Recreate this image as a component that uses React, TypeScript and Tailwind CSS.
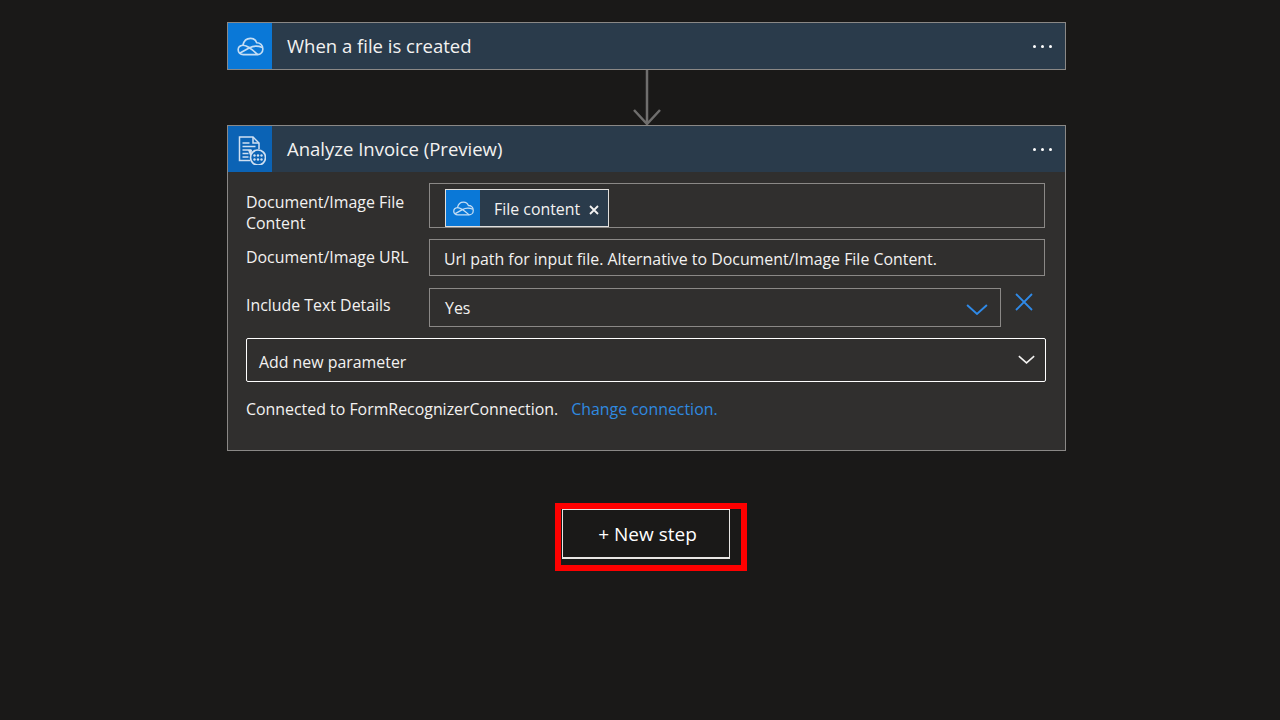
import React from 'react';

const CloudIcon = ({ className }: { className: string }) => (
  <svg className={className} viewBox="0 0 28 20" fill="none" stroke="currentColor" strokeWidth={1.700} strokeLinejoin="round">
    <path d="M6.500 18.500C3 18.500 1 16 1 13.500 1 11 3 9 6 8.700 7 4 10.500 1.500 14 1.500c3 0 5.500 1.500 6.500 4.500C24 6 27 8.500 27 12.500c0 3.500-2.500 6-5.500 6z" />
    <path d="M6 8.700c5.500.3 9.500 4.300 15.500 9.800M3 16.800l9.500-5.300c4-2.200 9-2.600 14-.5" />
  </svg>
);

const InvoiceIcon = () => (
  <svg className="w-[32px] h-[32px] text-[#cfe0f2]" viewBox="0 0 32 32" fill="none" stroke="currentColor" strokeWidth={1.500}>
    <path d="M16 27.500H5.500V4h13.500l6 6v6" />
    <path d="M19 4v6h6" />
    <path d="M8.500 10h7M8.500 13.500h13M8.500 17h9M8.500 20.500h6M8.500 24h6" />
    <path d="M14 17l4 0-1 8z" fill="currentColor" stroke="none" />
    <circle cx="24" cy="24.500" r="7.500" fill="#0b63b5" strokeWidth={1.700} />
    <g fill="currentColor" stroke="none">
      <circle cx="20.500" cy="22.500" r="1.200" />
      <circle cx="24" cy="22.500" r="1.200" />
      <circle cx="27.500" cy="22.500" r="1.200" />
      <circle cx="20.500" cy="26.500" r="1.200" />
      <circle cx="24" cy="26.500" r="1.200" />
      <circle cx="27.500" cy="26.500" r="1.200" />
    </g>
  </svg>
);

const Chevron = ({ className }: { className: string }) => (
  <svg className={className} viewBox="0 0 20 10" fill="none" stroke="currentColor" strokeWidth={1.800}>
    <path d="M1 1l9 8 9-8" />
  </svg>
);

const Dots = () => (
  <div className="flex items-center gap-[5px] mr-[13px]">
    <span className="w-[3px] h-[3px] rounded-full bg-white" />
    <span className="w-[3px] h-[3px] rounded-full bg-white" />
    <span className="w-[3px] h-[3px] rounded-full bg-white" />
  </div>
);

const CardHeader = ({ title, iconBg, icon }: { title: string; iconBg: string; icon: React.ReactNode }) => (
  <div className="flex items-center h-[46px] bg-[#2a3b4b]">
    <div className={`w-[44px] h-full flex items-center justify-center ${iconBg}`}>{icon}</div>
    <div className="flex-1 pl-[15px] text-[18.500px] text-[#f3f2f1]">{title}</div>
    <Dots />
  </div>
);

export default function App() {
  return (
    <div className="w-[1280px] h-[720px] bg-[#1a1918] overflow-hidden pt-[22px] pl-[227px] text-[15.900px] text-[#f3f2f1] font-['Open_Sans','Noto_Sans',sans-serif]">
      <div className="w-[839px]">
        <div className="border border-[#8a8886]">
          <CardHeader title="When a file is created" iconBg="bg-[#0a78d7]" icon={<CloudIcon className="w-[27px] h-[19px] text-[#c5def5]" />} />
        </div>

        <div className="flex justify-center h-[55px] text-[#6f6e6d]">
          <svg className="w-[30px] h-[55px]" viewBox="0 0 30 55" fill="none" stroke="currentColor" strokeWidth={2.500}>
            <path d="M15 0v54M2 40l13 14 13-14" />
          </svg>
        </div>

        <div className="border border-[#8a8886] bg-[#302f2e] h-[326px]">
          <CardHeader title="Analyze Invoice (Preview)" iconBg="bg-[#0b63b5]" icon={<InvoiceIcon />} />

          <div className="pl-[18px] pt-[11px] pr-[20px]">
            <div className="flex h-[45px]">
              <div className="w-[183px] pt-[9px] leading-[21px] whitespace-nowrap">Document/Image File<br />Content</div>
              <div className="flex-1 border border-[#8a8886] pl-[15px]">
                <div className="inline-flex items-center h-[38px] mt-[5px] border border-[#e1dfdd] bg-[#2a3b4b]">
                  <div className="w-[34px] h-full flex items-center justify-center bg-[#0a78d7]">
                    <CloudIcon className="w-[21px] h-[15px] text-[#c5def5]" />
                  </div>
                  <span className="pl-[14px] pt-[3px] whitespace-nowrap">File content</span>
                  <svg className="w-[10px] h-[10px] ml-[9px] mr-[9px] mt-[3px]" viewBox="0 0 10 10" fill="none" stroke="currentColor" strokeWidth={1.800}>
                    <path d="M1 1l8 8M9 1l-8 8" />
                  </svg>
                </div>
              </div>
            </div>

            <div className="flex h-[37px] mt-[11px]">
              <div className="w-[183px] pt-[7px]">Document/Image URL</div>
              <div className="flex-1 border border-[#8a8886] pl-[14px] pt-[4px] flex items-center whitespace-nowrap">
                Url path for input file. Alternative to Document/Image File Content.
              </div>
            </div>

            <div className="flex h-[39px] mt-[12px]">
              <div className="w-[183px] pt-[6px]">Include Text Details</div>
              <div className="w-[572px] border border-[#8a8886] pl-[15px] pr-[12px] flex items-center justify-between">
                <span className="pt-[2px]">Yes</span>
                <Chevron className="w-[22px] h-[11px] text-[#2f8ae8] mt-[4px]" />
              </div>
              <svg className="w-[18px] h-[18px] ml-[14px] mt-[5px] text-[#2f8ae8]" viewBox="0 0 18 18" fill="none" stroke="currentColor" strokeWidth={1.800}>
                <path d="M1 1l16 16M17 1L1 17" />
              </svg>
            </div>

            <div className="flex items-center justify-between h-[44px] mt-[11px] mr-[-1px] border border-white rounded-[2px] pl-[12px] pr-[10px]">
              <span className="pt-[5px]">Add new parameter</span>
              <Chevron className="w-[17px] h-[9px] text-[#f3f2f1] mb-[2px]" />
            </div>

            <div className="mt-[17px] leading-[20px] whitespace-nowrap">
              Connected to FormRecognizerConnection.
              <span className="ml-[13px] text-[#2f8ae0]">Change connection.</span>
            </div>
          </div>
        </div>

        <div className="ml-[328px] mt-[52px] w-[192px] h-[68px] border-[6px] border-[#fe0000] pl-px">
          <div className="flex items-center justify-center w-[168px] h-[50px] border border-[#e8e6e4] border-b-2 pt-px pl-[3px] text-[19px] text-white">
            + New step
          </div>
        </div>
      </div>
    </div>
  );
}
